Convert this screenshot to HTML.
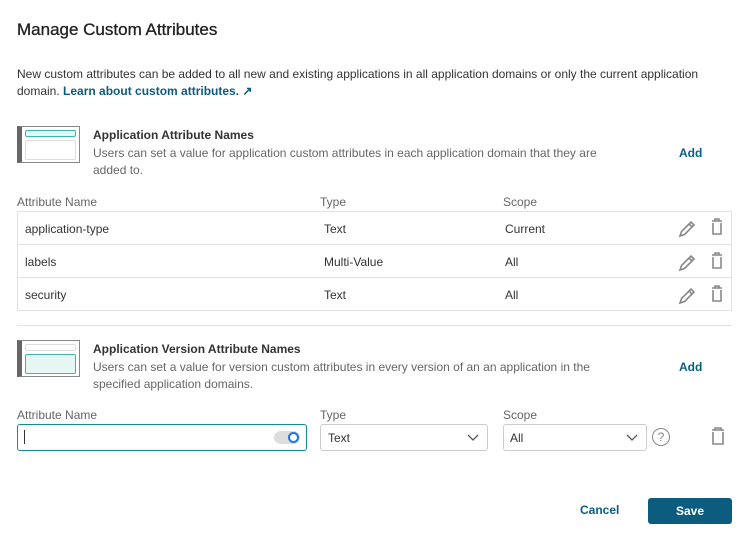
<!DOCTYPE html>
<html><head><style>
*{box-sizing:border-box;margin:0;padding:0}
body{width:752px;height:540px;background:#fff;font-family:"Liberation Sans",sans-serif;color:#333;position:relative;overflow:hidden}
.a{position:absolute}
.g{color:#666;font-size:12px}
.thumb{position:absolute;width:63px;height:37px;border:1px solid #888;border-left:5px solid #666;background:#fff}
.row{position:absolute;left:17px;width:715px;height:34px;border:1px solid #e2e2e2;font-size:12px}
.row span{position:absolute;top:10px}
.box{position:absolute;height:27px;border:1px solid #ccc;border-radius:3px;font-size:12px}
</style></head><body>
<div class="a" style="left:17px;top:20px;font-size:17px;color:#222;-webkit-text-stroke:0.3px #222">Manage Custom Attributes</div>
<div class="a" style="left:17px;top:66px;width:720px;font-size:12px;line-height:17px;color:#333">New custom attributes can be added to all new and existing applications in all application domains or only the current application domain. <b style="color:#0c5c80">Learn about custom attributes. ↗</b></div>

<div class="thumb" style="left:17px;top:126px"><div class="a" style="left:3px;top:3px;width:51px;height:7px;border:1px solid #3cb8a6;border-radius:2px;background:#e6f6f3"></div><div class="a" style="left:3px;top:13px;width:51px;height:20px;border:1px solid #ddd;border-radius:2px"></div></div>
<div class="a" style="left:93px;top:128px;font-size:12px;font-weight:bold;color:#333">Application Attribute Names</div>
<div class="a" style="left:93px;top:145px;width:540px;font-size:12px;line-height:17px;color:#666">Users can set a value for application custom attributes in each application domain that they are added to.</div>
<div class="a" style="left:679px;top:146px;font-size:12px;font-weight:bold;color:#0c5c80">Add</div>

<div class="a g" style="left:17px;top:195px">Attribute Name</div>
<div class="a g" style="left:320px;top:195px">Type</div>
<div class="a g" style="left:503px;top:195px">Scope</div>

<div class="row" style="top:211px"><span style="left:7px">application-type</span><span style="left:306px">Text</span><span style="left:487px">Current</span></div>
<div class="row" style="top:244px"><span style="left:7px">labels</span><span style="left:306px">Multi-Value</span><span style="left:487px">All</span></div>
<div class="row" style="top:277px"><span style="left:7px">security</span><span style="left:306px">Text</span><span style="left:487px">All</span></div>
<svg class="a" style="left:670px;top:211px" width="60" height="100" fill="none" stroke="#888" stroke-width="1.6">
<g id="ic"><path d="M10 25l1.5-4.5 9.5-9.5 3 3-9.5 9.5z M19 13l3 3"/><path d="M42 10h10 M45 10v-2h4v2 M43 12v11h8v-11"/></g>
<use href="#ic" y="34"/><use href="#ic" y="67"/>
</svg>

<div class="a" style="left:17px;top:325px;width:715px;height:1px;background:#e2e2e2"></div>

<div class="thumb" style="left:17px;top:340px"><div class="a" style="left:3px;top:3px;width:51px;height:7px;border:1px solid #ddd;border-radius:2px"></div><div class="a" style="left:3px;top:13px;width:51px;height:20px;border:1px solid #3cb8a6;border-radius:2px;background:#e6f6f3"></div></div>
<div class="a" style="left:93px;top:342px;font-size:12px;font-weight:bold;color:#333">Application Version Attribute Names</div>
<div class="a" style="left:93px;top:359px;width:540px;font-size:12px;line-height:17px;color:#666">Users can set a value for version custom attributes in every version of an an application in the specified application domains.</div>
<div class="a" style="left:679px;top:360px;font-size:12px;font-weight:bold;color:#0c5c80">Add</div>

<div class="a g" style="left:17px;top:408px">Attribute Name</div>
<div class="a g" style="left:320px;top:408px">Type</div>
<div class="a g" style="left:503px;top:408px">Scope</div>

<div class="box" style="left:17px;top:424px;width:290px;border:1px solid #0f8e8a"><div class="a" style="left:6px;top:5px;width:1px;height:14px;background:#333"></div><div class="a" style="left:256px;top:6px;width:26px;height:13px;border-radius:7px;background:#ddd"></div><div class="a" style="left:270px;top:7px;width:11px;height:11px;border:2px solid #1a73e8;border-radius:50%;background:#fff"></div></div>
<div class="box" style="left:320px;top:424px;width:168px"><span class="a" style="left:7px;top:6px">Text</span><svg class="a" style="left:146px;top:9px" width="12" height="8"><path d="M1 1l5 5 5-5" fill="none" stroke="#555" stroke-width="1.3"/></svg></div>
<div class="box" style="left:503px;top:424px;width:144px"><span class="a" style="left:6px;top:6px">All</span><svg class="a" style="left:122px;top:9px" width="12" height="8"><path d="M1 1l5 5 5-5" fill="none" stroke="#555" stroke-width="1.3"/></svg></div>
<div class="a" style="left:652px;top:428px;width:18px;height:18px;border:1.5px solid #888;border-radius:50%;font-size:12px;color:#888;text-align:center;line-height:16px">?</div>
<svg class="a" style="left:706px;top:424px" width="24" height="26" fill="none" stroke="#888" stroke-width="1.6"><path d="M6 6h12 M9 6v-2h6v2 M7 8v12h10v-12"/></svg>

<div class="a" style="left:580px;top:503px;font-size:12px;font-weight:bold;color:#0c5c80">Cancel</div>
<div class="a" style="left:648px;top:498px;width:84px;height:26px;background:#0c5c80;border-radius:3px;color:#fff;font-size:12px;font-weight:bold;text-align:center;line-height:26px">Save</div>
</body></html>
